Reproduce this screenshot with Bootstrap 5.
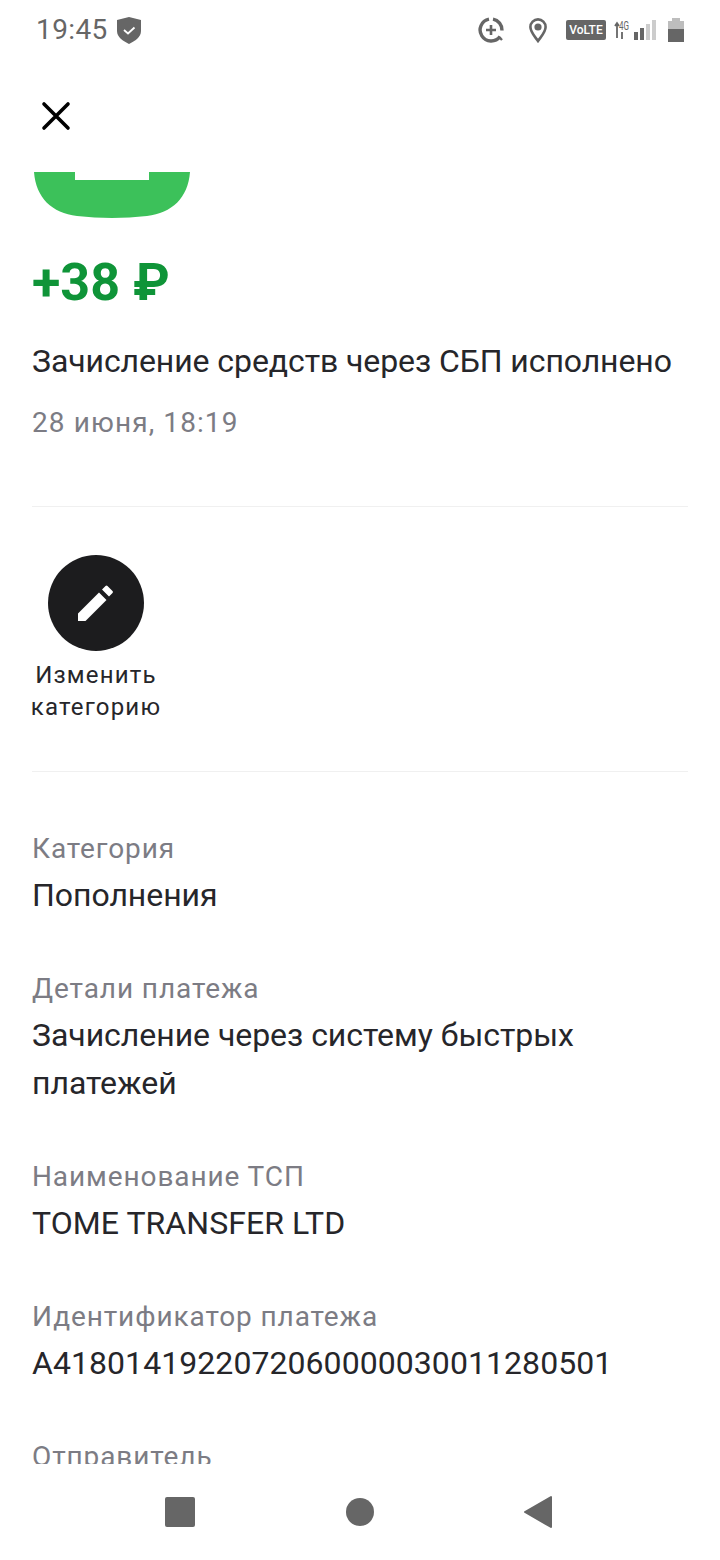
<!DOCTYPE html>
<html lang="ru">
<head>
  <meta charset="UTF-8">
  <title>Операция</title>
  <meta name="viewport" content="width=device-width, initial-scale=1">
  <link href="https://cdn.jsdelivr.net/npm/bootstrap@5.3.3/dist/css/bootstrap.min.css" rel="stylesheet">
  <style>
    body {
      font-family: Roboto, "Liberation Sans", sans-serif;
      background: #fff;
      color: #26262a;
    }
    .phone-screen { width: 720px; height: 1560px; }
    .status-row { height: 60px; padding: 0 36px; color: #666; }
    .status-left { gap: 9px; }
    .status-time { font-size: 28px; line-height: 60px; letter-spacing: .4px; }
    .volte-tag {
      width: 40px; height: 20px; border-radius: 2px; background: #666; color: #fff;
      font-size: 12px; font-weight: 500; line-height: 20px; text-align: center; margin-left: 19px;
    }
    .net-icon { margin-left: 8px; overflow: visible; }
    .signal-icon { margin-left: 4px; }
    .battery-icon { margin-left: 12px; }
    .pin-icon { margin-left: 24px; }
    .tool-row { height: 112px; padding-left: 40px; padding-top: 40px; }
    .scroll-area { height: 1292px; overflow: hidden; padding: 0 32px; }
    .amount-text { font-size: 52px; font-weight: 700; line-height: 60px; color: #0f9438; margin-top: 35px; }
    .title-text { font-size: 32px; line-height: 40px; margin-top: 28px; white-space: nowrap; letter-spacing: -.09px; }
    .date-text { font-size: 28px; line-height: 36px; color: #7c7c84; margin-top: 24px; letter-spacing: 1.1px; }
    .split-line { border-top: 1px solid #f0f0f0; }
    .split-first { margin-top: 65px; }
    .round-btn { width: 96px; height: 96px; border-radius: 50%; background: #1c1c1e; }
    .action-box { width: 128px; }
    .action-label { font-size: 24px; line-height: 32px; letter-spacing: 1.2px; white-space: nowrap; margin-top: 8px; }
    .field-list { padding-top: 59px; }
    .field-label { font-size: 28px; line-height: 36px; color: #7c7c84; letter-spacing: .9px; }
    .field-value { font-size: 32px; line-height: 48px; margin-top: 4px; letter-spacing: -.04px; }
    .value-latin { letter-spacing: .06px; }
    .field-group { margin-bottom: 52px; }
    .nav-row { height: 96px; }
  </style>
</head>
<body>
  <div class="phone-screen d-flex flex-column">
    <div class="status-row d-flex align-items-center justify-content-between">
      <div class="status-left d-flex align-items-center">
        <span class="status-time">19:45</span>
        <svg width="24" height="27" viewBox="0 0 24 27"><path d="M12 0 L24 3 V14 C24 20 18 24 12 27 C6 24 0 20 0 14 V3 Z" fill="#666"/><path d="M7 13 L11 16.5 L17.5 10.5" fill="none" stroke="#fff" stroke-width="1.8"/></svg>
      </div>
      <div class="d-flex align-items-center">
        <svg width="28" height="28" viewBox="0 0 28 28" class="d-block"><path d="M12 3.2 A11 11 0 1 0 23 20.5" fill="none" stroke="#666" stroke-width="3.4"/><path d="M16 3.2 A11 11 0 0 1 25 14.5" fill="none" stroke="#666" stroke-width="3.4"/><path d="M14 9 V19 M9 14 H19" stroke="#666" stroke-width="2.6"/><path d="M22 21 L25 24" stroke="#666" stroke-width="2.4"/></svg>
        <svg width="18" height="25" viewBox="0 0 18 25" class="pin-icon d-block"><path d="M9 23 C5.5 18 1.4 14 1.4 9 A7.6 7.6 0 0 1 16.6 9 C16.6 14 12.5 18 9 23 Z" fill="none" stroke="#666" stroke-width="2.6"/><circle cx="9" cy="9" r="3.6" fill="#666"/></svg>
        <span class="volte-tag">VoLTE</span>
        <svg width="16" height="20" viewBox="0 0 16 20" class="net-icon d-block"><text x="5" y="10" font-size="12" font-family="Roboto" fill="#666" textLength="10" lengthAdjust="spacingAndGlyphs">4G</text><path d="M3 3 V18 M1 6 L3 3 L5 6 M8 12 V19" fill="none" stroke="#666" stroke-width="1.8"/></svg>
        <svg width="22" height="20" viewBox="0 0 22 20" class="signal-icon d-block"><rect x="0" y="12" width="4" height="8" fill="#666"/><rect x="6" y="8" width="4" height="12" fill="#666"/><rect x="12" y="4" width="4" height="16" fill="#ccc"/><rect x="18" y="0" width="4" height="20" fill="#ccc"/></svg>
        <svg width="16" height="24" viewBox="0 0 16 24" class="battery-icon d-block"><path d="M4 0 H12 V3 H16 V11 H0 V3 H4 Z" fill="#bdbdbd"/><rect x="0" y="11" width="16" height="13" fill="#666"/></svg>
      </div>
    </div>
    <div class="tool-row">
      <svg width="32" height="32" viewBox="0 0 32 32" class="d-block"><path d="M4 4 L28 28 M28 4 L4 28" stroke="#000" stroke-width="3.6" stroke-linecap="round"/></svg>
    </div>
    <div class="scroll-area flex-grow-1">
      <svg width="160" height="46" viewBox="0 0 160 46" class="d-block"><path d="M2 0 H43 V8 H117 V0 H158 C156 26 140 41 115 44 Q80 48 45 44 C20 41 4 26 2 0 Z" fill="#3cc15a"/></svg>
      <div class="amount-text">+38 ₽</div>
      <div class="title-text">Зачисление средств через СБП исполнено</div>
      <div class="date-text">28 июня, 18:19</div>
      <div class="split-line split-first pt-5">
        <div class="action-box d-flex flex-column align-items-center">
          <div class="round-btn d-flex align-items-center justify-content-center">
            <svg width="40" height="40" viewBox="0 0 40 40"><path d="M2 38 V30.5 L23 9.5 L30.5 17 L9.5 38 Z M26 6.5 L29.5 3 Q30.5 2 31.5 3 L36.5 8 Q37.5 9 36.5 10 L33 13.5 Z" fill="#fff"/></svg>
          </div>
          <div class="action-label text-center">Изменить<br>категорию</div>
        </div>
      </div>
      <div class="split-line mt-5 field-list">
        <div class="field-group">
          <div class="field-label">Категория</div>
          <div class="field-value">Пополнения</div>
        </div>
        <div class="field-group">
          <div class="field-label">Детали платежа</div>
          <div class="field-value">Зачисление через систему быстрых платежей</div>
        </div>
        <div class="field-group">
          <div class="field-label">Наименование ТСП</div>
          <div class="field-value value-latin">TOME TRANSFER LTD</div>
        </div>
        <div class="field-group">
          <div class="field-label">Идентификатор платежа</div>
          <div class="field-value value-latin">A4180141922072060000030011280501</div>
        </div>
        <div class="field-group">
          <div class="field-label">Отправитель</div>
        </div>
      </div>
    </div>
    <div class="nav-row d-flex align-items-center justify-content-center">
      <svg width="400" height="40" viewBox="0 0 400 40"><rect x="5" y="5" width="30" height="30" rx="2" fill="#666"/><circle cx="200" cy="20" r="14" fill="#666"/><path d="M365 20 L391 5 V35 Z" fill="#666" stroke="#666" stroke-width="2" stroke-linejoin="round"/></svg>
    </div>
  </div>
</body>
</html>
